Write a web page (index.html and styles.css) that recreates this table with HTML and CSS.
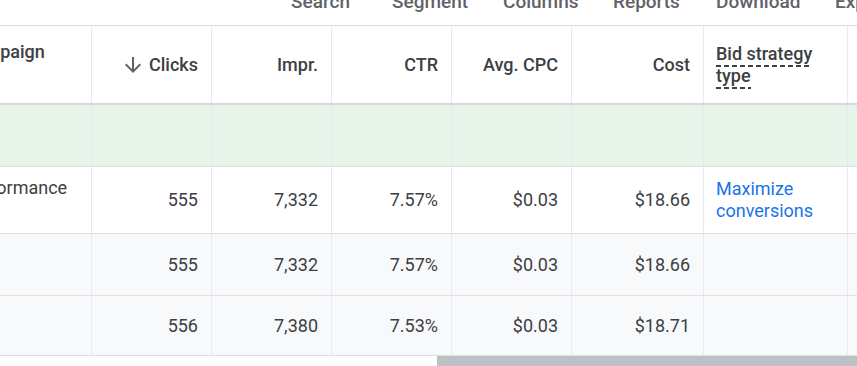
FILE: index.html
```html
<!DOCTYPE html>
<html>
<head>
<meta charset="utf-8">
<link rel="stylesheet" href="styles.css">
</head>
<body>
<div class="page">
  <div class="toolbar">
    <span class="tool t-search">Search</span>
    <span class="tool t-segment">Segment</span>
    <span class="tool t-columns">Columns</span>
    <span class="tool t-reports">Reports</span>
    <span class="tool t-download">Download</span>
    <span class="tool t-expand">Expand</span>
  </div>
  <div class="table">
    <div class="row head">
      <div class="cell c0 top-text">Campaign</div>
      <div class="cell num"><svg class="sort" viewBox="0 0 24 24" width="24" height="24"><path d="M20 12l-1.41-1.41L13 16.17V4h-2v12.17l-5.58-5.59L4 12l8 8 8-8z" fill="#5f6368"/></svg>Clicks</div>
      <div class="cell num">Impr.</div>
      <div class="cell num">CTR</div>
      <div class="cell num">Avg. CPC</div>
      <div class="cell num">Cost</div>
      <div class="cell txt"><div class="hlabel"><span class="dashed">Bid strategy type</span></div></div>
      <div class="cell last"></div>
    </div>
    <div class="row green">
      <div class="cell c0"></div>
      <div class="cell num"></div>
      <div class="cell num"></div>
      <div class="cell num"></div>
      <div class="cell num"></div>
      <div class="cell num"></div>
      <div class="cell txt"></div>
      <div class="cell last"></div>
    </div>
    <div class="row white r1">
      <div class="cell c0 top-text">Performance</div>
      <div class="cell num">555</div>
      <div class="cell num">7,332</div>
      <div class="cell num">7.57%</div>
      <div class="cell num">$0.03</div>
      <div class="cell num">$18.66</div>
      <div class="cell txt"><a class="link">Maximize conversions</a></div>
      <div class="cell last"></div>
    </div>
    <div class="row grey">
      <div class="cell c0"></div>
      <div class="cell num">555</div>
      <div class="cell num">7,332</div>
      <div class="cell num">7.57%</div>
      <div class="cell num">$0.03</div>
      <div class="cell num">$18.66</div>
      <div class="cell txt"></div>
      <div class="cell last"></div>
    </div>
    <div class="row grey last-row">
      <div class="cell c0"></div>
      <div class="cell num">556</div>
      <div class="cell num">7,380</div>
      <div class="cell num">7.53%</div>
      <div class="cell num">$0.03</div>
      <div class="cell num">$18.71</div>
      <div class="cell txt"></div>
      <div class="cell last"></div>
    </div>
  </div>
  <div class="scroll"><div class="thumb"></div></div>
</div>
</body>
</html>
```
FILE: styles.css
```css
html, body {
  margin: 0;
  padding: 0;
  background: #fff;
}
body {
  width: 857px;
  height: 366px;
  overflow: hidden;
  font-family: Roboto, "Liberation Sans", sans-serif;
  color: #3c4043;
}
.page {
  width: 857px;
  height: 366px;
  overflow: hidden;
}
.toolbar {
  height: 26px;
  border-bottom: 1px solid #dadce0;
  box-sizing: border-box;
  display: flex;
  align-items: flex-start;
}
.tool {
  font-size: 19px;
  font-weight: 500;
  color: #5f6368;
  line-height: 19px;
  margin-top: -8px;
  white-space: nowrap;
  flex: none;
}
.t-search { margin-left: 291px; width: 101px; }
.t-segment { width: 111px; }
.t-columns { width: 110px; }
.t-reports { width: 103px; }
.t-download { width: 119px; }
.t-expand { width: 60px; }
.table {
  margin-left: -49px;
  width: 1000px;
}
.row {
  display: grid;
  grid-template-columns: 141px 120px 120px 120px 120px 132px 144px 1fr;
  border-bottom: 1px solid #e0e0e0;
}
.cell {
  border-right: 1px solid #e8eaed;
  box-sizing: border-box;
  display: flex;
  align-items: center;
  font-size: 18px;
  line-height: 22px;
  padding: 0 12px;
  min-width: 0;
  overflow: hidden;
  color: #3c4043;
}
.num {
  justify-content: flex-end;
  padding-right: 13px;
}
.txt {
  justify-content: flex-start;
}
.c0 {
  white-space: nowrap;
}
.head {
  height: 77px;
  border-bottom: 2px solid #d5d7da;
}
.head .cell {
  font-weight: 500;
}
.head .c0 {
  align-items: flex-start;
  padding-top: 15px;
}
.sort {
  margin-right: 4px;
  flex: none;
}
.dashed {
  padding-bottom: 3px;
  background-image: linear-gradient(to right, #3c4043 62%, transparent 62%);
  background-size: 8px 2px;
  background-repeat: repeat-x;
  background-position: 0 100%;
  -webkit-box-decoration-break: clone;
  box-decoration-break: clone;
}
.green {
  height: 61px;
  background: #e6f4ea;
}
.white {
  height: 66px;
  background: #fff;
}
.grey {
  height: 61px;
  background: #f8f9fa;
}
.last-row {
  height: 59px;
}
.r1 .c0 {
  align-items: flex-start;
  padding-top: 10px;
}
.link {
  color: #1a73e8;
  text-decoration: none;
}
.scroll {
  height: 11px;
  display: flex;
}
.thumb {
  margin-left: 437px;
  width: 420px;
  height: 11px;
  background: #bdc1c6;
}
```
